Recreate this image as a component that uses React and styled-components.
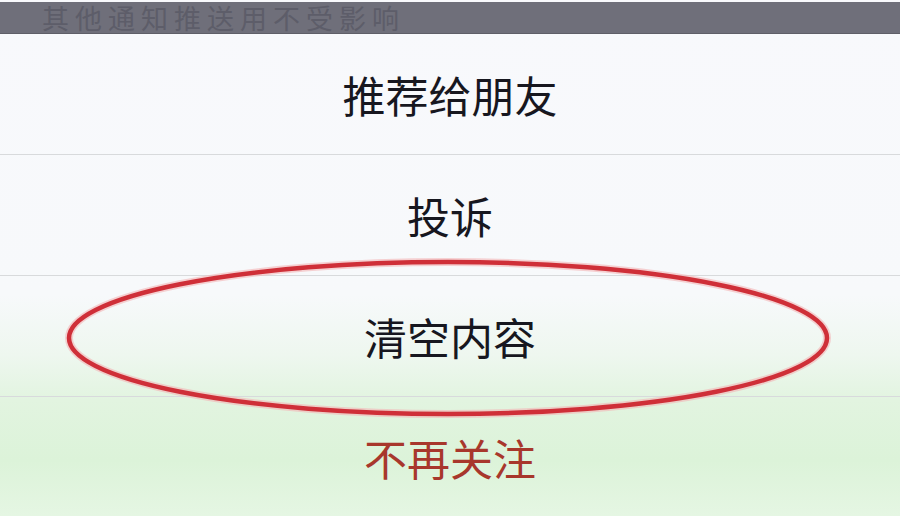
import React from "react";
import styled, { createGlobalStyle } from "styled-components";

const Global = createGlobalStyle`
  html, body { margin: 0; padding: 0; background: #f8f9fc; overflow: hidden; }
  body { font-family: "Noto Sans CJK SC", "Noto Sans", sans-serif; }
`;

const Sheet = styled.div`
  position: relative;
  width: 900px;
  height: 516px;
  overflow: hidden;
  display: flex;
  flex-direction: column;
  padding-top: 2px;
  box-sizing: border-box;
  background: linear-gradient(
    180deg,
    #f8f9fc 0px,
    #f7f9fb 295px,
    #eef7ef 355px,
    #e2f4e0 400px,
    #dcf3d9 460px,
    #e5f6e3 516px
  );
`;

const Banner = styled.div`
  height: 32px;
  flex: none;
  background: #6f6f7a;
  border-bottom: 1px solid #5f5f68;
  display: flex;
  align-items: center;
  padding-left: 42px;
  box-sizing: border-box;
`;

const BannerText = styled.span`
  font-size: 27px;
  line-height: 30px;
  color: #5d5d69;
  letter-spacing: 6px;
  white-space: nowrap;
`;

const Row = styled.div`
  flex: ${(p) => (p.$last ? "1" : "none")};
  height: ${(p) => (p.$last ? "auto" : "121px")};
  display: flex;
  align-items: center;
  justify-content: center;
  border-bottom: ${(p) => (p.$last ? "none" : "1.5px solid #d8dadc")};
  box-sizing: border-box;
  font-size: 43px;
  color: ${(p) => (p.$danger ? "#a8372c" : "#17171f")};
`;

const Mark = styled.svg`
  position: absolute;
  left: 0;
  top: 0;
  width: 900px;
  height: 516px;
  pointer-events: none;
`;

export default function App() {
  return (
    <>
      <Global />
      <Sheet>
        <Banner>
          <BannerText>其他通知推送用不受影响</BannerText>
        </Banner>
        <Row>推荐给朋友</Row>
        <Row>投诉</Row>
        <Row>清空内容</Row>
        <Row $last $danger>不再关注</Row>
        <Mark viewBox="0 0 900 516">
          <ellipse cx="448" cy="338" rx="379" ry="76" fill="none" stroke="#f3b4b6" strokeWidth="8" opacity="0.6" />
          <ellipse cx="448" cy="338" rx="379" ry="76" fill="none" stroke="#cf2f38" strokeWidth="4.5" />
        </Mark>
      </Sheet>
    </>
  );
}
